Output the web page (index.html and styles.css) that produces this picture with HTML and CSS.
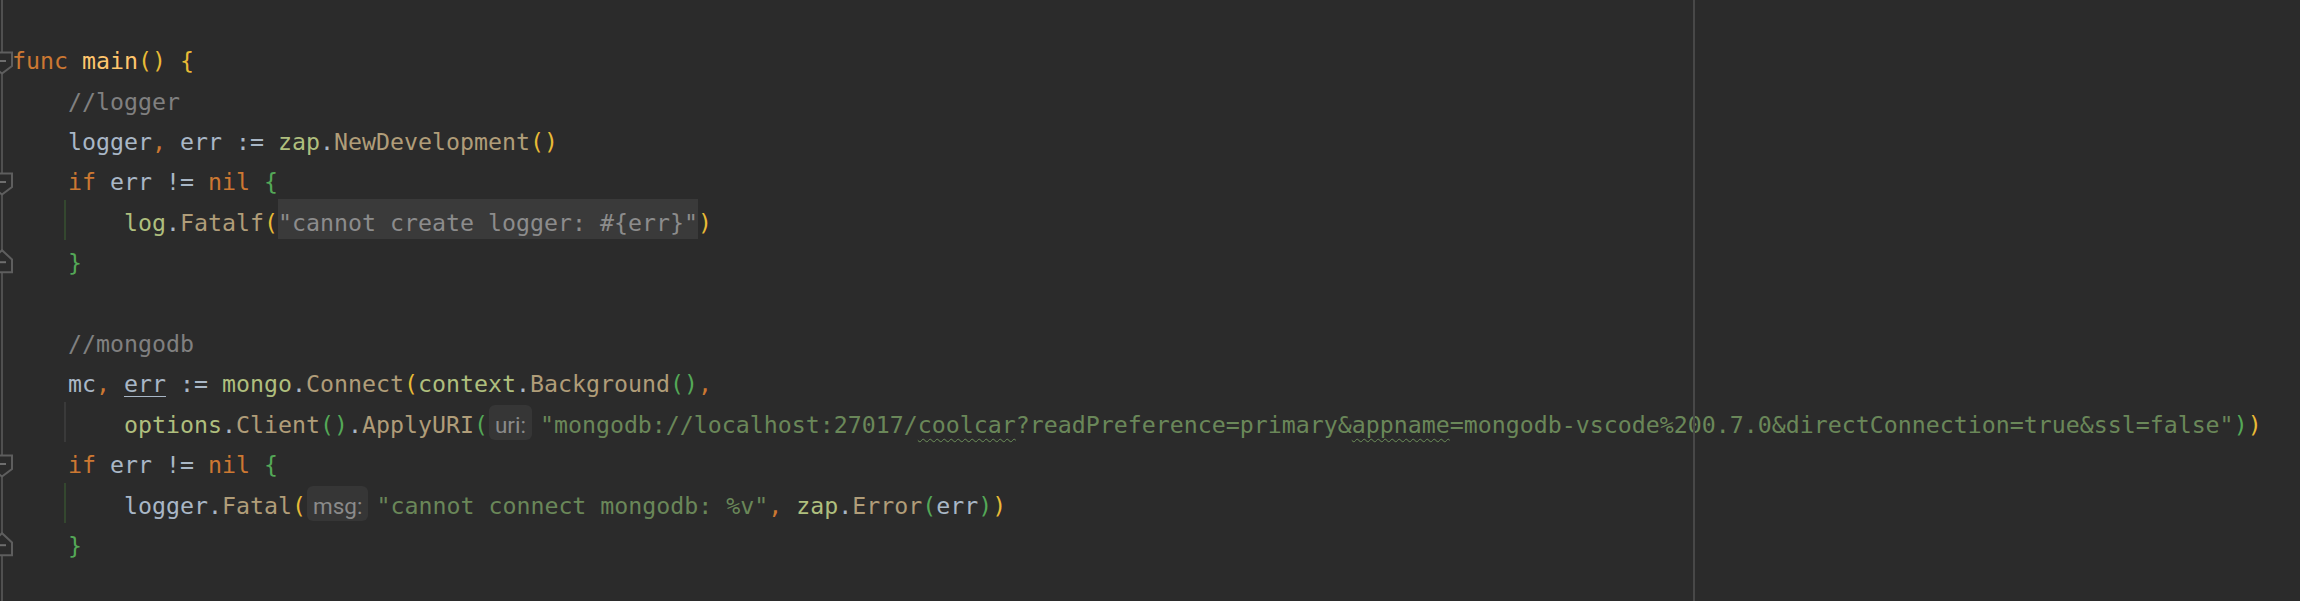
FILE: index.html
```html
<!DOCTYPE html>
<html>
<head>
<meta charset="utf-8">
<link rel="stylesheet" href="styles.css">
</head>
<body>
<div class="editor">
  <div class="gutter-rule"></div>
  <div class="margin-rule"></div>
  <div class="lines">
    <div class="line"><span class="gut"></span><span class="code"></span></div>
    <div class="line"><span class="gut"><svg class="fold" width="14" height="41" viewBox="0 0 14 41"><path d="M-8 13.6H12V27L2 34.6L-8 27Z"/><path class="minus" d="M-4 22H6"/></svg></span><span class="code"><span class="kw">func</span> <span class="fd">main</span><span class="b1">()</span> <span class="b1">{</span></span></div>
    <div class="line"><span class="gut"></span><span class="code"><span class="ind"></span><span class="cm">//logger</span></span></div>
    <div class="line"><span class="gut"></span><span class="code"><span class="ind"></span><span class="id">logger</span><span class="kw">,</span> <span class="id">err</span> <span class="id">:=</span> <span class="pk">zap</span><span class="id">.</span><span class="fc">NewDevelopment</span><span class="b1">()</span></span></div>
    <div class="line"><span class="gut"><svg class="fold" width="14" height="41" viewBox="0 0 14 41"><path d="M-8 13.6H12V27L2 34.6L-8 27Z"/><path class="minus" d="M-4 22H6"/></svg></span><span class="code"><span class="ind"></span><span class="kw">if</span> <span class="id">err</span> <span class="id">!=</span> <span class="kw">nil</span> <span class="b2">{</span></span></div>
    <div class="line"><span class="gut"></span><span class="code"><span class="ind"></span><span class="ind guide-green"></span><span class="pk">log</span><span class="id">.</span><span class="fc">Fatalf</span><span class="b1">(</span><span class="fmt">"cannot create logger: #{err}"</span><span class="b1">)</span></span></div>
    <div class="line"><span class="gut"><svg class="fold" width="14" height="41" viewBox="0 0 14 41"><path d="M-8 32.2H12V19.5L2 10.2L-8 19.5Z"/><path class="minus" d="M-4 22.2H6"/></svg></span><span class="code"><span class="ind"></span><span class="b2">}</span></span></div>
    <div class="line"><span class="gut"></span><span class="code"></span></div>
    <div class="line"><span class="gut"></span><span class="code"><span class="ind"></span><span class="cm">//mongodb</span></span></div>
    <div class="line"><span class="gut"></span><span class="code"><span class="ind"></span><span class="id">mc</span><span class="kw">,</span> <span class="id unused">err</span> <span class="id">:=</span> <span class="pk">mongo</span><span class="id">.</span><span class="fc">Connect</span><span class="b1">(</span><span class="pk">context</span><span class="id">.</span><span class="fc">Background</span><span class="b2">()</span><span class="kw">,</span></span></div>
    <div class="line"><span class="gut"></span><span class="code"><span class="ind"></span><span class="ind guide-gray"></span><span class="pk">options</span><span class="id">.</span><span class="fc">Client</span><span class="b2">()</span><span class="id">.</span><span class="fc">ApplyURI</span><span class="b2">(</span><span class="hint">uri:</span><span class="str">"mongodb://localhost:27017/<span class="typo">coolcar</span>?readPreference=primary&amp;<span class="typo">appname</span>=mongodb-vscode%200.7.0&amp;directConnection=true&amp;ssl=false"</span><span class="b2">)</span><span class="b1">)</span></span></div>
    <div class="line"><span class="gut"><svg class="fold" width="14" height="41" viewBox="0 0 14 41"><path d="M-8 13.6H12V27L2 34.6L-8 27Z"/><path class="minus" d="M-4 22H6"/></svg></span><span class="code"><span class="ind"></span><span class="kw">if</span> <span class="id">err</span> <span class="id">!=</span> <span class="kw">nil</span> <span class="b2">{</span></span></div>
    <div class="line"><span class="gut"></span><span class="code"><span class="ind"></span><span class="ind guide-green"></span><span class="id">logger</span><span class="id">.</span><span class="fc">Fatal</span><span class="b1">(</span><span class="hint">msg:</span><span class="str">"cannot connect mongodb: %v"</span><span class="kw">,</span> <span class="pk">zap</span><span class="id">.</span><span class="fc">Error</span><span class="b2">(</span><span class="id">err</span><span class="b2">)</span><span class="b1">)</span></span></div>
    <div class="line"><span class="gut"><svg class="fold" width="14" height="41" viewBox="0 0 14 41"><path d="M-8 32.2H12V19.5L2 10.2L-8 19.5Z"/><path class="minus" d="M-4 22.2H6"/></svg></span><span class="code"><span class="ind"></span><span class="b2">}</span></span></div>
  </div>
</div>
</body>
</html>
```

FILE: styles.css
```css
html, body {
  margin: 0;
  padding: 0;
  background: #2b2b2b;
}

.editor {
  position: relative;
  width: 2300px;
  height: 601px;
  overflow: hidden;
  background: #2b2b2b;
}

.gutter-rule {
  position: absolute;
  left: 1px;
  top: 0;
  bottom: 0;
  width: 2px;
  background: #505050;
}

.margin-rule {
  position: absolute;
  left: 1693px;
  top: 0;
  bottom: 0;
  width: 2px;
  background: #484848;
}

.lines {
  display: flex;
  flex-direction: column;
}

.line {
  display: flex;
  height: 40.4px;
  align-items: stretch;
}

.line:first-child {
  height: 38.5px;
}

.gut {
  position: relative;
  flex: 0 0 12px;
  width: 12px;
}

.fold {
  display: block;
  position: relative;
  z-index: 2;
}

.fold path {
  fill: #2b2b2b;
  stroke: #5e5e5e;
  stroke-width: 2;
}

.fold path.minus {
  fill: none;
  stroke: #6e6e6e;
  stroke-width: 2;
}

.code {
  flex: 1;
  font-family: "DejaVu Sans Mono", monospace;
  font-size: 23.25px;
  line-height: 40.4px;
  white-space: pre;
  color: #a9b7c6;
  padding-top: 2.8px;
  box-sizing: border-box;
}

.ind {
  display: inline-block;
  width: 4ch;
  height: 40.4px;
  vertical-align: top;
  margin-top: -2.8px;
}

.guide-green,
.guide-gray {
  margin-left: -4px;
  width: calc(4ch + 4px);
  box-sizing: border-box;
}

.guide-green {
  border-left: 2px solid #34472f;
}

.guide-gray {
  border-left: 2px solid #3a3a3a;
}

.kw { color: #cc7832; }
.id { color: #a9b7c6; }
.fd { color: #ffc66d; }
.cm { color: #808080; }
.pk { color: #afbf7e; }
.fc { color: #b09d79; }
.str { color: #6a8759; }
.b1 { color: #e8ba36; }
.b2 { color: #54a857; }

.fmt {
  color: #8c8c8c;
  background: #3a3a3a;
  padding: 10px 0 3.5px;
}

.unused {
  text-decoration: underline solid #a9b7c6;
  text-decoration-thickness: 1px;
  text-underline-offset: 4px;
}

.typo {
  text-decoration: underline wavy #6d8f5a;
  text-decoration-thickness: 1px;
  text-underline-offset: 5px;
}

.hint {
  font-family: Roboto, "Noto Sans", sans-serif;
  font-size: 22.5px;
  color: #8a8a8a;
  background: #363636;
  border-radius: 6px;
  padding: 7px 6px 2px;
  margin: 0 8px 0 1px;
}
```
